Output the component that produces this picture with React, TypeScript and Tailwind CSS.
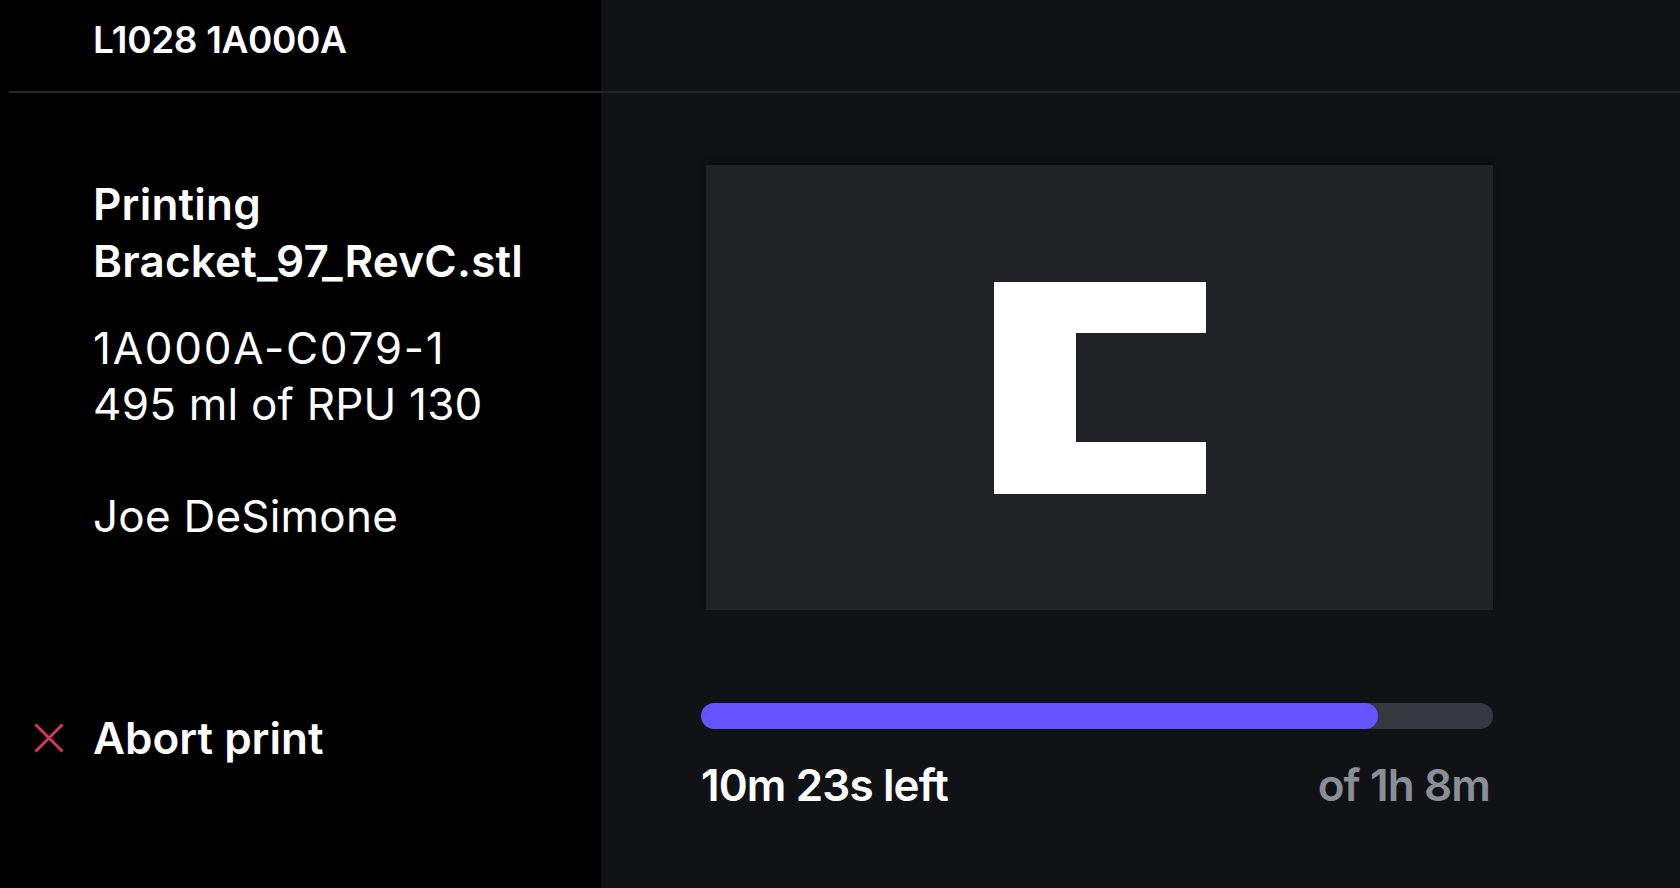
import React from "react";

const progress = 85.5;

function AbortIcon() {
  return (
    <svg width="30" height="30" viewBox="0 0 30 30" fill="none" className="shrink-0">
      <path d="M1.5 1.5L28.5 28.5M28.5 1.5L1.5 28.5" stroke="#d3385c" strokeWidth="3" />
    </svg>
  );
}

export default function App() {
  return (
    <div className="flex h-[888px] w-full overflow-hidden font-['Inter',sans-serif] text-white antialiased">
      {/* Job details */}
      <aside className="flex w-[601px] shrink-0 flex-col bg-black">
        <header className="ml-[9px] flex h-[93px] shrink-0 items-start border-b-2 border-[#29292b] pl-[84px] pt-[21px]">
          <span className="text-[37px] leading-[37px] font-semibold tracking-[-0.01em]">L1028 1A000A</span>
        </header>

        <div className="flex flex-1 flex-col pb-[124px]">
          <div className="pl-[93px] pt-[83px] text-[44px] tracking-[0.005em]">
            <div className="font-semibold leading-[57px]">
              <div>Printing</div>
              <div>Bracket_97_RevC.stl</div>
            </div>
            <div className="mt-[30px] leading-[56px]">
              <div className="tracking-[0.04em]">1A000A-C079-1</div>
              <div>495 ml of RPU 130</div>
            </div>
            <div className="mt-[58px] leading-[52px]">Joe DeSimone</div>
          </div>

          <button className="mt-auto flex items-center gap-[29px] pl-[34px] text-left text-[44px] leading-[52px] font-semibold">
            <AbortIcon />
            <span>Abort print</span>
          </button>
        </div>
      </aside>

      {/* Preview + progress */}
      <main className="flex flex-1 flex-col bg-[#111216]">
        <div className="h-[93px] shrink-0 border-b-2 border-[#25262a]" />

        <div className="flex flex-col pl-[100px] pr-[187px] pt-[72px]">
          <div className="ml-[5px] flex h-[445px] items-center justify-center bg-[#212226] shadow-[0_-3px_6px_rgba(0,0,0,0.45)]">
            <div className="flex h-[212px] w-[212px]">
              <div className="w-[82px] bg-white" />
              <div className="flex flex-1 flex-col justify-between">
                <div className="h-[51px] bg-white" />
                <div className="h-[52px] bg-white" />
              </div>
            </div>
          </div>

          <div className="mt-[93px] h-[26px] w-full overflow-hidden rounded-full bg-[#353841]">
            <div className="h-full rounded-full bg-[#6753ff]" style={{ width: `${progress}%` }} />
          </div>

          <div className="mt-[34px] flex items-baseline justify-between pr-[3px] text-[44px] leading-[44px] font-semibold tracking-[-0.02em]">
            <span>10m 23s left</span>
            <span className="text-[#8a8f97]">of 1h 8m</span>
          </div>
        </div>
      </main>
    </div>
  );
}
